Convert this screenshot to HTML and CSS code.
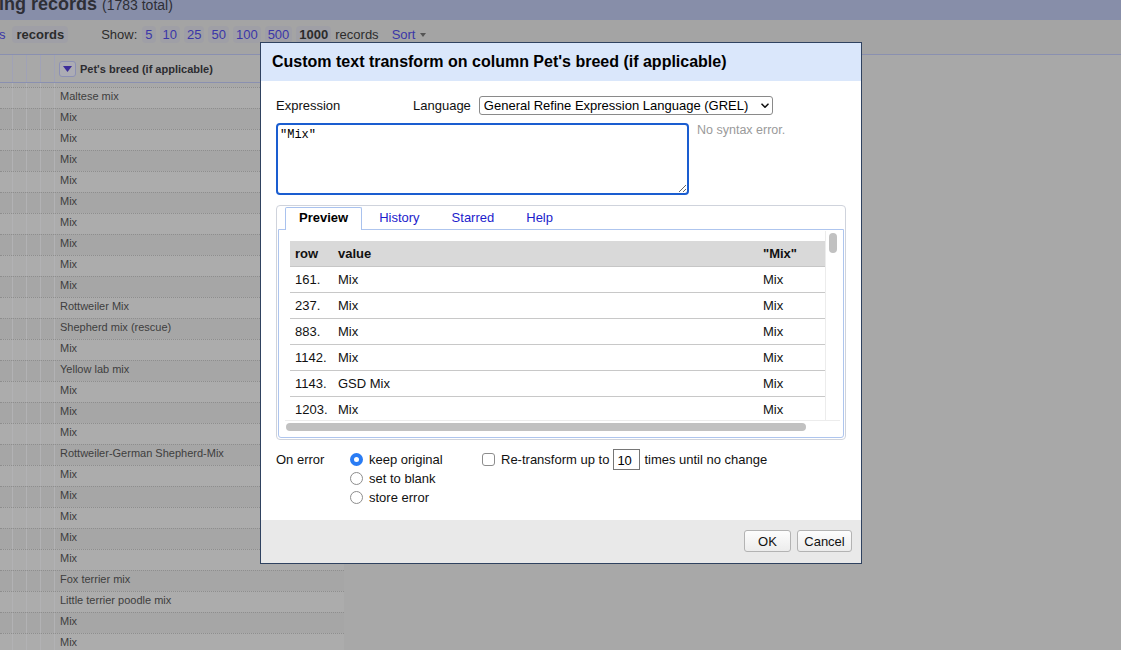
FILE: index.html
```html
<!DOCTYPE html>
<html>
<head>
<meta charset="utf-8">
<title>Custom text transform</title>
<link rel="stylesheet" href="styles.css">
</head>
<body>
<div class="page">
  <div class="summary-bar">
    <h1 class="summary-title">Showing records <span class="summary-total">(1783 total)</span></h1>
  </div>
  <div class="view-controls">
    <div class="mode-group">
      <a class="pill link mode-rows">rows</a>
      <span class="pill mode-current">records</span>
    </div>
    <div class="show-group">
      <span class="show-label">Show:</span>
      <a class="pill link">5</a>
      <a class="pill link">10</a>
      <a class="pill link">25</a>
      <a class="pill link">50</a>
      <a class="pill link">100</a>
      <a class="pill link">500</a>
      <span class="pill current">1000</span>
      <span class="show-unit">records</span>
    </div>
    <a class="link sort">Sort <span class="caret"></span></a>
  </div>

  <div class="data-table">
    <div class="dt-row dt-head">
      <div class="c c1"></div><div class="c c2"></div><div class="c c3"></div><div class="c c4"></div>
      <div class="c c5 head-cell">
        <span class="col-menu"><svg width="9" height="6" viewBox="0 0 9 6"><path d="M0 0h9L4.5 6z" fill="#3b2c9a"/></svg></span>
        <span class="col-name">Pet's breed (if applicable)</span>
      </div>
    </div>
    <div class="dt-row dt-spacer">
      <div class="c c1"></div><div class="c c2"></div><div class="c c3"></div><div class="c c4"></div><div class="c c5"></div>
    </div>
    <div class="dt-body">
      <div class="dt-row odd"><div class="c c1"></div><div class="c c2"></div><div class="c c3"></div><div class="c c4"></div><div class="c c5">Maltese mix</div></div>
      <div class="dt-row even"><div class="c c1"></div><div class="c c2"></div><div class="c c3"></div><div class="c c4"></div><div class="c c5">Mix</div></div>
      <div class="dt-row odd"><div class="c c1"></div><div class="c c2"></div><div class="c c3"></div><div class="c c4"></div><div class="c c5">Mix</div></div>
      <div class="dt-row even"><div class="c c1"></div><div class="c c2"></div><div class="c c3"></div><div class="c c4"></div><div class="c c5">Mix</div></div>
      <div class="dt-row odd"><div class="c c1"></div><div class="c c2"></div><div class="c c3"></div><div class="c c4"></div><div class="c c5">Mix</div></div>
      <div class="dt-row even"><div class="c c1"></div><div class="c c2"></div><div class="c c3"></div><div class="c c4"></div><div class="c c5">Mix</div></div>
      <div class="dt-row odd"><div class="c c1"></div><div class="c c2"></div><div class="c c3"></div><div class="c c4"></div><div class="c c5">Mix</div></div>
      <div class="dt-row even"><div class="c c1"></div><div class="c c2"></div><div class="c c3"></div><div class="c c4"></div><div class="c c5">Mix</div></div>
      <div class="dt-row odd"><div class="c c1"></div><div class="c c2"></div><div class="c c3"></div><div class="c c4"></div><div class="c c5">Mix</div></div>
      <div class="dt-row even"><div class="c c1"></div><div class="c c2"></div><div class="c c3"></div><div class="c c4"></div><div class="c c5">Mix</div></div>
      <div class="dt-row odd"><div class="c c1"></div><div class="c c2"></div><div class="c c3"></div><div class="c c4"></div><div class="c c5">Rottweiler Mix</div></div>
      <div class="dt-row even"><div class="c c1"></div><div class="c c2"></div><div class="c c3"></div><div class="c c4"></div><div class="c c5">Shepherd mix (rescue)</div></div>
      <div class="dt-row odd"><div class="c c1"></div><div class="c c2"></div><div class="c c3"></div><div class="c c4"></div><div class="c c5">Mix</div></div>
      <div class="dt-row even"><div class="c c1"></div><div class="c c2"></div><div class="c c3"></div><div class="c c4"></div><div class="c c5">Yellow lab mix</div></div>
      <div class="dt-row odd"><div class="c c1"></div><div class="c c2"></div><div class="c c3"></div><div class="c c4"></div><div class="c c5">Mix</div></div>
      <div class="dt-row even"><div class="c c1"></div><div class="c c2"></div><div class="c c3"></div><div class="c c4"></div><div class="c c5">Mix</div></div>
      <div class="dt-row odd"><div class="c c1"></div><div class="c c2"></div><div class="c c3"></div><div class="c c4"></div><div class="c c5">Mix</div></div>
      <div class="dt-row even"><div class="c c1"></div><div class="c c2"></div><div class="c c3"></div><div class="c c4"></div><div class="c c5">Rottweiler-German Shepherd-Mix</div></div>
      <div class="dt-row odd"><div class="c c1"></div><div class="c c2"></div><div class="c c3"></div><div class="c c4"></div><div class="c c5">Mix</div></div>
      <div class="dt-row even"><div class="c c1"></div><div class="c c2"></div><div class="c c3"></div><div class="c c4"></div><div class="c c5">Mix</div></div>
      <div class="dt-row odd"><div class="c c1"></div><div class="c c2"></div><div class="c c3"></div><div class="c c4"></div><div class="c c5">Mix</div></div>
      <div class="dt-row even"><div class="c c1"></div><div class="c c2"></div><div class="c c3"></div><div class="c c4"></div><div class="c c5">Mix</div></div>
      <div class="dt-row odd"><div class="c c1"></div><div class="c c2"></div><div class="c c3"></div><div class="c c4"></div><div class="c c5">Mix</div></div>
      <div class="dt-row even"><div class="c c1"></div><div class="c c2"></div><div class="c c3"></div><div class="c c4"></div><div class="c c5">Fox terrier mix</div></div>
      <div class="dt-row odd"><div class="c c1"></div><div class="c c2"></div><div class="c c3"></div><div class="c c4"></div><div class="c c5">Little terrier poodle mix</div></div>
      <div class="dt-row even"><div class="c c1"></div><div class="c c2"></div><div class="c c3"></div><div class="c c4"></div><div class="c c5">Mix</div></div>
      <div class="dt-row odd"><div class="c c1"></div><div class="c c2"></div><div class="c c3"></div><div class="c c4"></div><div class="c c5">Mix</div></div>
      <div class="dt-row even"><div class="c c1"></div><div class="c c2"></div><div class="c c3"></div><div class="c c4"></div><div class="c c5">Mix</div></div>
    </div>
  </div>
</div>

<div class="dialog">
  <div class="dialog-header">Custom text transform on column Pet's breed (if applicable)</div>
  <div class="dialog-body">
    <div class="expr-row">
      <span class="expr-label">Expression</span>
      <span class="lang-label">Language</span>
      <span class="select-wrap">
        <select class="lang-select"><option>General Refine Expression Language (GREL)</option></select>
        <svg class="select-chevron" width="8" height="6" viewBox="0 0 8 6"><path d="M1 1.2l3 3 3-3" fill="none" stroke="#111" stroke-width="1.6" stroke-linecap="round" stroke-linejoin="round"/></svg>
      </span>
    </div>
    <div class="editor-row">
      <textarea class="expr-input">"Mix"</textarea>
      <div class="expr-status">No syntax error.</div>
    </div>

    <div class="tabs">
      <div class="tab-nav">
        <span class="tab active">Preview</span>
        <span class="tab">History</span>
        <span class="tab">Starred</span>
        <span class="tab">Help</span>
      </div>
      <div class="tab-panel">
        <div class="preview-view">
          <div class="preview-main">
            <div class="preview-table-wrap">
              <table class="preview-table">
                <thead>
                  <tr><th class="col-row">row</th><th class="col-value">value</th><th class="col-result">"Mix"</th></tr>
                </thead>
                <tbody>
                  <tr><td>161.</td><td>Mix</td><td>Mix</td></tr>
                  <tr><td>237.</td><td>Mix</td><td>Mix</td></tr>
                  <tr><td>883.</td><td>Mix</td><td>Mix</td></tr>
                  <tr><td>1142.</td><td>Mix</td><td>Mix</td></tr>
                  <tr><td>1143.</td><td>GSD Mix</td><td>Mix</td></tr>
                  <tr><td>1203.</td><td>Mix</td><td>Mix</td></tr>
                </tbody>
              </table>
            </div>
            <div class="vscroll"><div class="vthumb"></div></div>
          </div>
          <div class="hscroll"><div class="hthumb"></div></div>
        </div>
      </div>
    </div>

    <div class="options-row">
      <span class="opt-label">On error</span>
      <div class="radio-group">
        <label class="opt"><input type="radio" name="onerror" checked><span>keep original</span></label>
        <label class="opt"><input type="radio" name="onerror"><span>set to blank</span></label>
        <label class="opt"><input type="radio" name="onerror"><span>store error</span></label>
      </div>
      <div class="repeat-group">
        <input type="checkbox" class="repeat-check">
        <span>Re-transform up to</span>
        <input type="text" class="repeat-count" value="10">
        <span>times until no change</span>
      </div>
    </div>
  </div>
  <div class="dialog-footer">
    <button class="btn btn-ok">OK</button>
    <button class="btn btn-cancel">Cancel</button>
  </div>
</div>
</body>
</html>
```

FILE: styles.css
```css
* { box-sizing: border-box; }
html, body { margin: 0; padding: 0; }
body {
  width: 1121px;
  height: 650px;
  overflow: hidden;
  position: relative;
  background: #a8a8a8;
  font-family: "Liberation Sans", Arial, sans-serif;
  color: #222;
}

/* ---------- page behind the dialog (dimmed) ---------- */
.summary-bar {
  height: 20px;
  background: #878ea9;
  overflow: hidden;
}
.summary-title {
  margin: -6px 0 0 -49px;
  font-size: 18px;
  line-height: 20px;
  font-weight: bold;
  color: #2e2f36;
  white-space: nowrap;
}
.summary-total {
  font-size: 14px;
  font-weight: normal;
}

.view-controls {
  height: 35px;
  padding-top: 6px;
  background: #a4a4a4;
  border-bottom: 1px solid #8a90b0;
  display: flex;
  align-items: flex-start;
  font-size: 13px;
  line-height: 17px;
  color: #2c2c2c;
  white-space: nowrap;
}
.pill {
  display: inline-block;
  padding: 0 3px;
  margin: 0 2px;
  border-radius: 4px;
  background: #9f9fa6;
}
.link { color: #3a36a8; text-decoration: none; }
.mode-group { display: flex; margin-left: -27px; }
.mode-rows { background: transparent; }
.mode-current { font-weight: bold; margin-left: 2px; padding: 0 4px; }
.show-group { display: flex; margin-left: 31px; }
.show-label { margin-right: 3px; }
.current { font-weight: bold; }
.show-unit { margin-left: 2px; }
.sort { margin-left: 13px; }
.caret {
  display: inline-block;
  width: 0; height: 0;
  border-left: 3.5px solid transparent;
  border-right: 3.5px solid transparent;
  border-top: 4px solid #555;
  vertical-align: 2px;
  margin-left: 1px;
}

.data-table { width: 344px; }
.dt-row { display: flex; }
.c { border-right: 1px solid #b2b2b4; flex: none; }
.c1 { width: 13px; }
.c2, .c3, .c4 { width: 14px; }
.c5 { width: 289px; border-right: none; }
.dt-head { height: 28px; border-bottom: 1px solid #8a90b0; }
.dt-head .c { border-right-color: #a0a2b6; }
.head-cell {
  display: flex;
  align-items: center;
  padding-left: 4px;
  font-size: 11px;
  font-weight: bold;
  color: #2c2c30;
}
.col-menu {
  width: 17px;
  height: 16px;
  border: 1px solid #8c90b4;
  border-radius: 3px;
  background: #acacb4;
  display: flex;
  align-items: center;
  justify-content: center;
  margin-right: 4px;
}
.dt-spacer { height: 4px; }
.dt-body .dt-row {
  height: 21px;
  border-top: 1px dotted #8e8e8e;
  font-size: 11px;
  line-height: 16px;
  color: #3e3e3e;
}
.dt-body .c5 { padding-left: 5px; white-space: nowrap; }
.dt-row.odd { background: #acacac; }
.dt-row.even { background: #a6a6a6; }

/* ---------- dialog ---------- */
.dialog {
  position: absolute;
  left: 260px;
  top: 42px;
  width: 602px;
  border: 1px solid #2f4260;
  background: #fff;
  font-size: 13px;
  color: #111;
}
.dialog-header {
  height: 38px;
  padding: 0 11px;
  background: #dae7fb;
  display: flex;
  align-items: center;
  font-size: 16px;
  font-weight: bold;
  color: #000;
}
.dialog-body { padding: 15px 15px 13px 15px; }

.expr-row { display: flex; align-items: center; height: 19px; }
.expr-label { width: 137px; }
.lang-label { margin-right: 8px; }
.select-wrap { position: relative; display: inline-block; }
.lang-select {
  appearance: none;
  -webkit-appearance: none;
  width: 294px;
  height: 19px;
  border: 1px solid #8a8a8a;
  border-radius: 3px;
  background: #fff;
  font-family: "Liberation Sans", Arial, sans-serif;
  font-size: 13px;
  color: #000;
  padding: 0 0 0 4px;
  line-height: 17px;
}
.select-chevron { position: absolute; right: 4px; top: 7px; }

.editor-row { display: flex; margin-top: 8px; }
.expr-input {
  width: 413px;
  height: 72px;
  border: 2px solid #1a5dd0;
  border-radius: 4px;
  padding: 3px 2px;
  font-family: "Liberation Mono", "Courier New", monospace;
  font-size: 12px;
  line-height: 15px;
  color: #000;
  outline: none;
  resize: both;
}
.expr-status {
  margin-left: 8px;
  padding-top: 0;
  font-size: 12.5px;
  color: #9a9a9a;
}

.tabs {
  margin-top: 10px;
  width: 570px;
  border: 1px solid #cfd3dc;
  border-radius: 4px;
  padding: 1px;
}
.tab-nav { display: flex; padding: 0 0 0 7px; height: 22px; align-items: flex-end; }
.tab {
  height: 21px;
  line-height: 17px;
  padding: 0 14px;
  margin-right: 2px;
  color: #1c1ccc;
  border: 1px solid transparent;
  border-bottom: none;
}
.tab.active {
  color: #000;
  font-weight: bold;
  background: #fff;
  border-color: #a9c2ee;
  border-radius: 2px 2px 0 0;
  height: 23px;
  line-height: 20px;
  margin-bottom: -1px;
  position: relative;
  padding: 0 13px;
}
.tab-panel {
  border: 1px solid #aec5ee;
  border-radius: 0 0 3px 3px;
  padding: 1px 3px 4px 6px;
}
.preview-view { display: flex; flex-direction: column; height: 202px; }
.preview-main { display: flex; height: 189px; }
.preview-table-wrap {
  flex: 1;
  overflow: hidden;
  padding: 10px 0 0 5px;
}
.preview-table {
  border-collapse: collapse;
  width: 535px;
  font-size: 13px;
  color: #111;
}
.preview-table th {
  background: #d9d9d9;
  text-align: left;
  font-weight: bold;
  height: 25px;
  padding: 0 5px;
  border-bottom: 1px solid #c6c6c6;
}
.preview-table td {
  height: 26px;
  padding: 0 5px;
  border-bottom: 1px solid #c8c8c8;
  white-space: nowrap;
}
.col-row { width: 43px; }
.col-result { width: 67px; }
.vscroll {
  width: 15px;
  border-left: 1px solid #ececec;
  padding: 2px 0 0 3px;
}
.vthumb { width: 8px; height: 20px; border-radius: 4px; background: #c1c1c1; }
.hscroll {
  height: 13px;
  border-top: 1px solid #ececec;
  padding: 2px 0 0 1px;
}
.hthumb { width: 520px; height: 8px; border-radius: 4px; background: #c1c1c1; }

.options-row {
  display: flex;
  margin-top: 10px;
  line-height: 19px;
}
.opt-label { width: 74px; }
.radio-group { display: flex; flex-direction: column; width: 132px; }
.opt { display: flex; align-items: center; height: 19px; }
.opt input {
  appearance: none;
  -webkit-appearance: none;
  width: 13px;
  height: 13px;
  margin: 0 6px 0 0;
  border: 1px solid #8d8d8d;
  border-radius: 50%;
  background: #fff;
}
.opt input:checked {
  border: 4px solid #2a7cf4;
  background: #fff;
}
.repeat-group { display: flex; align-items: center; height: 19px; }
.repeat-check {
  appearance: none;
  -webkit-appearance: none;
  width: 13px;
  height: 13px;
  margin: 0 6px 0 0;
  border: 1px solid #8d8d8d;
  border-radius: 3px;
  background: #fff;
}
.repeat-count {
  width: 27px;
  height: 21px;
  margin: 0 4px;
  border: 1px solid #767676;
  padding: 2px 3px 0;
  font-family: "Liberation Sans", Arial, sans-serif;
  font-size: 13px;
  color: #000;
}

.dialog-footer {
  height: 43px;
  background: #e9e9e9;
  display: flex;
  justify-content: flex-end;
  align-items: flex-start;
  padding: 10px 9px 0 0;
  gap: 6px;
}
.btn {
  height: 22px;
  border: 1px solid #b3b3b3;
  border-radius: 3px;
  background: linear-gradient(#fdfdfd, #ececec);
  font-family: "Liberation Sans", Arial, sans-serif;
  font-size: 13px;
  color: #111;
  padding: 0;
}
.btn-ok { width: 47px; }
.btn-cancel { width: 55px; }
```
